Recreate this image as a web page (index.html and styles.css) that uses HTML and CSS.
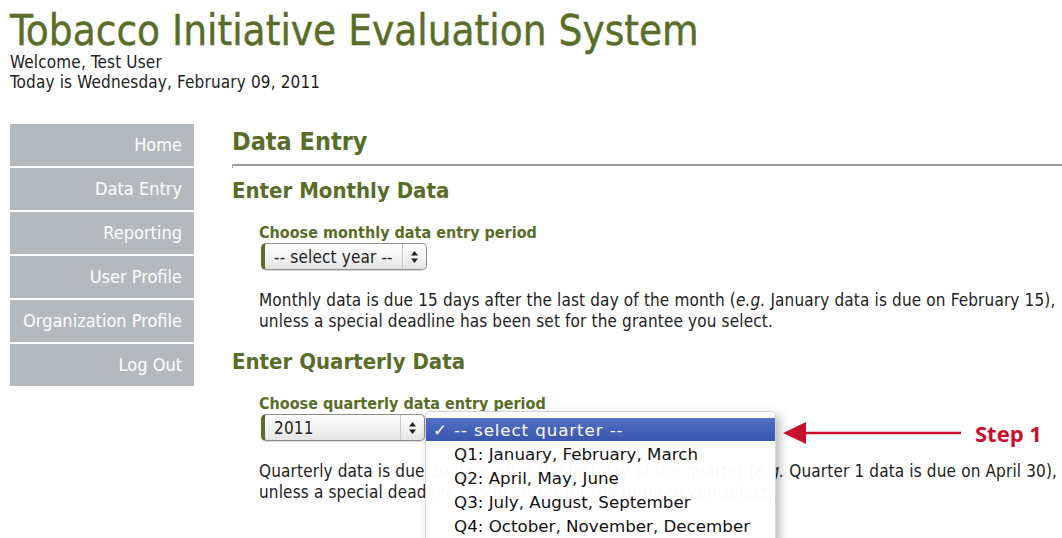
FILE: index.html
```html
<!DOCTYPE html>
<html lang="en">
<head>
<meta charset="utf-8">
<title>Tobacco Initiative Evaluation System - Data Entry</title>
<link rel="stylesheet" href="styles.css">
</head>
<body>
  <header class="masthead">
    <h1 class="site-title">Tobacco Initiative Evaluation System</h1>
    <p class="greeting">Welcome, Test User</p>
    <p class="greeting">Today is Wednesday, February 09, 2011</p>
  </header>

  <div class="layout">
    <nav class="sidebar">
      <a class="nav-item" href="#">Home</a>
      <a class="nav-item" href="#">Data Entry</a>
      <a class="nav-item" href="#">Reporting</a>
      <a class="nav-item" href="#">User Profile</a>
      <a class="nav-item" href="#">Organization Profile</a>
      <a class="nav-item" href="#">Log Out</a>
    </nav>

    <main class="content">
      <h2 class="page-title">Data Entry</h2>
      <hr class="rule">

      <section class="entry">
        <h3 class="entry-title">Enter Monthly Data</h3>
        <div class="field">
          <label class="field-label">Choose monthly data entry period</label>
          <div class="select-row">
            <div class="select select-year">
              <span class="select-value">-- select year --</span>
              <span class="select-arrows">
                <svg width="7" height="12" viewBox="0 0 7 12"><path d="M3.5 0L7 4.5H0z M3.5 12L0 7.5H7z" fill="#222"/></svg>
              </span>
            </div>
          </div>
        </div>
        <p class="note">Monthly data is due 15 days after the last day of the month (<i>e.g.</i> January data is due on February 15),<br>unless a special deadline has been set for the grantee you select.</p>
      </section>

      <section class="entry entry-quarterly">
        <h3 class="entry-title">Enter Quarterly Data</h3>
        <div class="field">
          <label class="field-label">Choose quarterly data entry period</label>
          <div class="select-row">
            <div class="select select-quarter-year">
              <span class="select-value">2011</span>
              <span class="select-arrows">
                <svg width="7" height="12" viewBox="0 0 7 12"><path d="M3.5 0L7 4.5H0z M3.5 12L0 7.5H7z" fill="#222"/></svg>
              </span>
            </div>
            <div class="dropdown">
              <ul class="menu">
                <li class="menu-item is-selected"><span class="check">✓</span>-- select quarter --</li>
                <li class="menu-item"><span class="check"></span>Q1: January, February, March</li>
                <li class="menu-item"><span class="check"></span>Q2: April, May, June</li>
                <li class="menu-item"><span class="check"></span>Q3: July, August, September</li>
                <li class="menu-item"><span class="check"></span>Q4: October, November, December</li>
              </ul>
              <div class="callout">
                <svg class="callout-arrow" width="178" height="24" viewBox="0 0 178 24">
                  <path d="M0 12L23 1V10.7H178V13.3H23V23z" fill="#c8102e"/>
                </svg>
                <span class="callout-label">Step 1</span>
              </div>
            </div>
          </div>
        </div>
        <p class="note">Quarterly data is due 30 days after the last day of the quarter (<i>e.g.</i> Quarter 1 data is due on April 30),<br>unless a special deadline has been set for the grantee you select.</p>
      </section>
    </main>
  </div>
</body>
</html>
```
FILE: styles.css
```css
* {
  box-sizing: border-box;
}

html {
  height: 100%;
  overflow: hidden;
}

html, body {
  margin: 0;
  padding: 0;
  background: #fff;
}

body {
  min-height: 100%;
  font-family: "DejaVu Sans Condensed", "DejaVu Sans", sans-serif;
  color: #222;
  font-size: 17px;
  letter-spacing: 0.15px;
  padding-left: 10px;
}

/* ---- masthead ---- */
.masthead {
  padding-top: 9px;
}

.site-title {
  margin: 0;
  font-weight: normal;
  font-size: 41.8px;
  line-height: 43px;
  letter-spacing: 0;
  color: #5a6d28;
  -webkit-text-stroke: 0.4px #5a6d28;
}

.greeting {
  margin: 0;
  font-size: 17px;
  line-height: 20px;
}

/* ---- two columns ---- */
.layout {
  display: flex;
  gap: 38px;
  margin-top: 32px;
}

.sidebar {
  width: 184px;
  flex: none;
  display: flex;
  flex-direction: column;
  gap: 2px;
}

.nav-item {
  display: block;
  height: 42px;
  line-height: 42px;
  padding-right: 12px;
  text-align: right;
  background: #b4b9bd;
  color: #fff;
  text-decoration: none;
  font-size: 18px;
  letter-spacing: 0;
}

.content {
  flex: 1;
  min-width: 0;
}

.page-title {
  margin: 2px 0 0;
  font-size: 25px;
  line-height: 32px;
  font-weight: bold;
  letter-spacing: 0;
  color: #5a6d28;
}

.rule {
  margin: 6px 0 0;
  height: 4px;
  border: 0;
  border-top: 2px solid #9c9c9c;
  border-left: 1px solid #9c9c9c;
}

.entry-title {
  margin: 9px 0 0;
  font-size: 22px;
  line-height: 28px;
  font-weight: bold;
  letter-spacing: 0;
  color: #5a6d28;
}

.entry-quarterly .entry-title {
  margin-top: 16px;
}

.field {
  margin: 18px 0 0 27px;
}

.field-label {
  display: block;
  font-weight: bold;
  font-size: 16px;
  line-height: 20px;
  letter-spacing: 0;
  color: #5a6d28;
}

.select-row {
  position: relative;
  display: flex;
  margin-top: 0;
  margin-left: 2px;
}

.select {
  display: flex;
  align-items: stretch;
  height: 27px;
  border: 1px solid #8d8d8d;
  border-left: 4px solid #5a6d28;
  border-radius: 5px;
  background: linear-gradient(#ffffff, #f3f3f3 50%, #e4e4e4);
  box-shadow: 0 1px 1px rgba(0, 0, 0, 0.15);
  font-size: 17px;
}

.select-year {
  width: 166px;
}

.select-quarter-year {
  width: 164px;
}

.select-value {
  flex: 1;
  display: flex;
  align-items: center;
  padding-left: 9px;
}

.select-arrows {
  width: 24px;
  display: flex;
  align-items: center;
  justify-content: center;
  border-left: 1px solid #c9c9c9;
}

.note {
  margin: 20px 0 0 27px;
  font-size: 17px;
  line-height: 21px;
}

/* ---- open quarter menu ---- */
.dropdown {
  position: absolute;
  left: 164px;
  top: -3px;
}

.menu {
  list-style: none;
  margin: 0;
  padding: 6px 0 0;
  width: 351px;
  height: 132px;
  background: rgba(255, 255, 255, 0.975);
  border: 1px solid #d4d4d4;
  border-bottom: 0;
  border-radius: 5px 5px 0 0;
  box-shadow: 4px 4px 10px rgba(0, 0, 0, 0.28);
  font-family: "DejaVu Sans", sans-serif;
  font-size: 16.7px;
  letter-spacing: 0;
}

.menu-item {
  display: flex;
  align-items: center;
  height: 24px;
  color: #111;
}

.menu-item.is-selected {
  height: 23px;
  margin-bottom: 1px;
  background: linear-gradient(#5270c6, #3a56b0);
  color: #fff;
  letter-spacing: 0.9px;
}

.check {
  width: 28px;
  padding-left: 7px;
  letter-spacing: 0;
}

.callout {
  position: absolute;
  left: 358px;
  top: 7px;
  display: flex;
  align-items: center;
  gap: 14px;
  white-space: nowrap;
}

.callout-label {
  font-family: "Open Sans", "Liberation Sans", sans-serif;
  font-weight: bold;
  font-size: 22px;
  letter-spacing: 0;
  color: #c8102e;
}
```
